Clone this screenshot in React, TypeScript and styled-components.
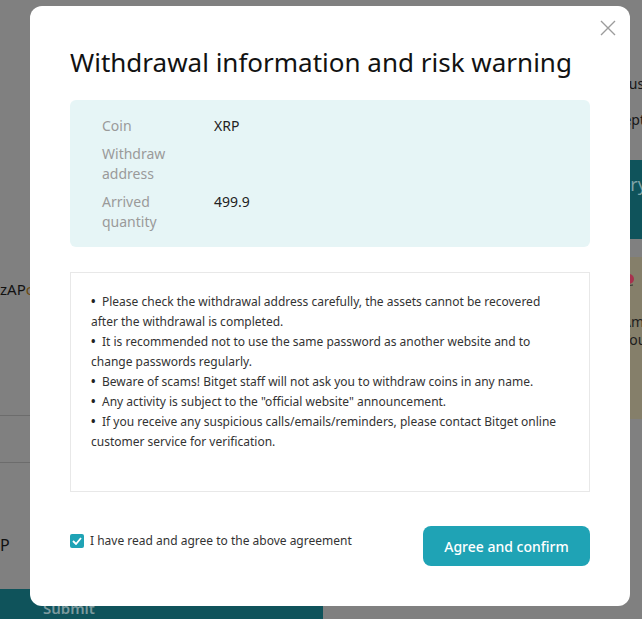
import React from 'react';
import styled, { createGlobalStyle } from 'styled-components';

const GlobalStyle = createGlobalStyle`
    html, body {
        margin: 0;
        padding: 0;
        font-family: "Noto Sans", "Open Sans", Arial, sans-serif;
    }
`

const Page = styled.div`
    position: relative;
    display: flex;
    width: 100%;
    height: 619px;
    overflow: hidden;
    background: #808080;
`

const LeftColumn = styled.div`
    width: 323px;
    display: flex;
    flex-direction: column;
    padding-top: 279px;
    box-sizing: border-box;
`

const BackText = styled.div<{ $size?: number }>`
    font-size: ${(props) => props.$size || 15}px;
    line-height: 20px;
    color: #111;
    white-space: nowrap;
    span {
        color: #6b4a12;
    }
`

const BackDivider = styled.div<{ $gap: number }>`
    height: 1px;
    background: #6c6c6c;
    margin-top: ${(props) => props.$gap}px;
`

const SubmitBar = styled.div`
    margin-top: auto;
    height: 30px;
    background: #0f535b;
    color: #7c9a9e;
    font-size: 15px;
    font-weight: 600;
    line-height: 38px;
    padding-left: 43px;
`

const RightColumn = styled.div`
    margin-left: auto;
    width: 72px;
    flex-shrink: 0;
    display: flex;
    flex-direction: column;
    padding-top: 74px;
    box-sizing: border-box;
`

const SideText = styled.div<{ $indent: number }>`
    font-size: 14px;
    line-height: 20px;
    color: #161616;
    white-space: nowrap;
    margin-bottom: 16px;
    padding-left: ${(props) => props.$indent}px;
    b {
        color: #4a1430;
        font-weight: 400;
    }
`

const SideButton = styled.div`
    margin-top: 14px;
    height: 79px;
    background: #0f535b;
    color: #7fa3a7;
    font-size: 18px;
    line-height: 24px;
    padding: 12px 0 0 25px;
    box-sizing: border-box;
    white-space: nowrap;
`

const SideCard = styled.div`
    margin-top: 18px;
    height: 162px;
    background: #857f6a;
    padding: 16px 0 0 52px;
    box-sizing: border-box;
    font-size: 14px;
    line-height: 18px;
    color: #1e1e1e;
    p {
        margin: 0;
        white-space: nowrap;
    }
`

const Modal = styled.div`
    position: absolute;
    left: 30px;
    top: 6px;
    width: 600px;
    height: 600px;
    background: #fff;
    border-radius: 12px;
    padding: 36px 40px 0;
    box-sizing: border-box;
    display: flex;
    flex-direction: column;
`

const CloseButton = styled.button`
    position: absolute;
    top: 12px;
    right: 12px;
    width: 20px;
    height: 20px;
    padding: 0;
    border: none;
    background: none;
    display: flex;
    align-items: center;
    justify-content: center;
    cursor: pointer;
`

const Title = styled.h2`
    margin: 0;
    font-size: 26px;
    line-height: 40px;
    font-weight: 400;
    color: #121212;
`

const InfoBox = styled.div`
    margin-top: 18px;
    background: #e6f5f6;
    border-radius: 6px;
    padding: 16px 32px 15px;
    display: flex;
    flex-direction: column;
    gap: 8px;
`

const InfoRow = styled.div`
    display: flex;
    font-size: 14px;
    line-height: 20px;
`

const InfoLabel = styled.div`
    width: 112px;
    padding-right: 40px;
    box-sizing: border-box;
    color: #9a9a9a;
`

const InfoValue = styled.div`
    color: #222;
`

const WarningBox = styled.div`
    margin-top: 25px;
    height: 220px;
    border: 1px solid #e8e8e8;
    padding: 19px 20px 0;
    box-sizing: border-box;
    font-size: 12px;
    line-height: 20px;
    color: #333;
    p {
        margin: 0;
    }
`

const Bullet = styled.span`
    display: inline-block;
    width: 11px;
    font-weight: 700;
    color: #222;
`

const Footer = styled.div`
    margin-top: 34px;
    display: flex;
    justify-content: space-between;
    align-items: flex-start;
`

const AgreeLabel = styled.label`
    display: flex;
    align-items: center;
    gap: 6px;
    margin-top: 5px;
    font-size: 12px;
    line-height: 20px;
    color: #333;
`

const CheckBox = styled.span`
    width: 14px;
    height: 14px;
    border-radius: 2px;
    background: #1fa3b5;
    display: flex;
    align-items: center;
    justify-content: center;
`

const ConfirmButton = styled.button`
    width: 167px;
    height: 40px;
    border: none;
    border-radius: 8px;
    background: #1fa3b5;
    color: #fff;
    font-family: inherit;
    font-size: 14px;
    font-weight: 500;
    cursor: pointer;
`

const info = [
    { label: 'Coin', value: 'XRP' },
    { label: 'Withdraw address', value: '' },
    { label: 'Arrived quantity', value: '499.9' },
]

const warnings = [
    'Please check the withdrawal address carefully, the assets cannot be recovered after the withdrawal is completed.',
    'It is recommended not to use the same password as another website and to change passwords regularly.',
    'Beware of scams! Bitget staff will not ask you to withdraw coins in any name.',
    'Any activity is subject to the "official website" announcement.',
    'If you receive any suspicious calls/emails/reminders, please contact Bitget online customer service for verification.',
]

const App = () => {
    return (
        <Page>
            <GlobalStyle />
            <LeftColumn>
                <BackText>zAP<span>c</span></BackText>
                <BackDivider $gap={116} />
                <BackDivider $gap={46} />
                <BackText $size={16} style={{ marginTop: 72 }}>P</BackText>
                <SubmitBar>Submit</SubmitBar>
            </LeftColumn>
            <RightColumn>
                <SideText $indent={46}>Trus<b>t</b></SideText>
                <SideText $indent={31}>Accept</SideText>
                <SideButton>Query</SideButton>
                <SideCard>
                    <svg width="14" height="16" viewBox="0 0 14 16">
                        <circle cx="7" cy="6" r="5" fill="#a8324e" />
                        <path d="M3 13 L11 12" stroke="#333" strokeWidth="1" />
                    </svg>
                    <p style={{ marginTop: 20 }}>Am</p>
                    <p>You</p>
                </SideCard>
            </RightColumn>

            <Modal>
                <CloseButton aria-label="Close">
                    <svg width="16" height="16" viewBox="0 0 16 16">
                        <path d="M1 1 L15 15 M15 1 L1 15" stroke="#9c9c9c" strokeWidth="1.4" />
                    </svg>
                </CloseButton>
                <Title>Withdrawal information and risk warning</Title>
                <InfoBox>
                    {info.map((row) => (
                        <InfoRow key={row.label}>
                            <InfoLabel>{row.label}</InfoLabel>
                            <InfoValue>{row.value}</InfoValue>
                        </InfoRow>
                    ))}
                </InfoBox>
                <WarningBox>
                    {warnings.map((text) => (
                        <p key={text}><Bullet>•</Bullet>{text}</p>
                    ))}
                </WarningBox>
                <Footer>
                    <AgreeLabel>
                        <CheckBox>
                            <svg width="10" height="8" viewBox="0 0 10 8">
                                <path d="M1 4 L4 7 L9 1" stroke="#fff" strokeWidth="1.8" fill="none" />
                            </svg>
                        </CheckBox>
                        I have read and agree to the above agreement
                    </AgreeLabel>
                    <ConfirmButton>Agree and confirm</ConfirmButton>
                </Footer>
            </Modal>
        </Page>
    )
}

export default App
